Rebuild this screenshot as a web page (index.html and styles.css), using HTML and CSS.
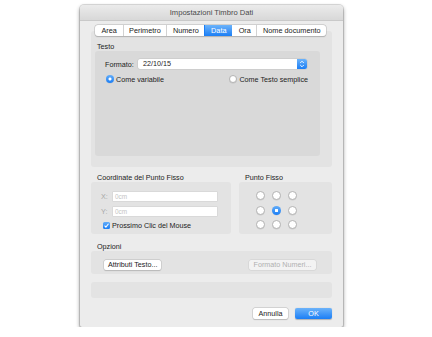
FILE: index.html
```html
<!DOCTYPE html>
<html lang="it">
<head>
    <meta charset="UTF-8">
    <meta name="viewport" content="width=device-width, initial-scale=1.0">
    <title>Impostazioni Timbro Dati</title>
    <link rel="stylesheet" href="styles.css">
</head>
<body>
    <div class="window">
        <div class="titlebar">Impostazioni Timbro Dati</div>
        <div class="content">
            <!-- Tabs -->
            <div class="tabs">
                <span class="tab">Area</span>
                <span class="tab">Perimetro</span>
                <span class="tab">Numero</span>
                <span class="tab selected">Data</span>
                <span class="tab">Ora</span>
                <span class="tab">Nome documento</span>
            </div>
            <div class="tab-panel">
                <div class="group-label">Testo</div>
                <div class="group inner">
                    <div class="format-row">
                        <span class="format-label">Formato:</span>
                        <div class="popup">
                            <span>22/10/15</span>
                            <span class="stepper">
                                <svg width="10" height="10" viewBox="0 0 10 10">
                                    <path d="M3.2 4 L5 2.2 L6.8 4" fill="none" stroke="#fff" stroke-width="0.9"/>
                                    <path d="M3.2 6 L5 7.8 L6.8 6" fill="none" stroke="#fff" stroke-width="0.9"/>
                                </svg>
                            </span>
                        </div>
                    </div>
                    <div class="radio-row">
                        <label class="radio-item"><span class="radio on"></span>Come variabile</label>
                        <label class="radio-item"><span class="radio"></span>Come Testo semplice</label>
                    </div>
                </div>
            </div>

            <!-- Fixed point -->
            <div class="split">
                <div class="split-left">
                    <div class="group-label">Coordinate del Punto Fisso</div>
                    <div class="group coords">
                        <div class="field-row">
                            <span class="axis">X:</span>
                            <span class="field">0cm</span>
                        </div>
                        <div class="field-row">
                            <span class="axis">Y:</span>
                            <span class="field">0cm</span>
                        </div>
                        <label class="check-row">
                            <span class="checkbox">
                                <svg width="8" height="8" viewBox="0 0 8 8">
                                    <path d="M1.8 4.2 L3.3 5.8 L6.3 2" fill="none" stroke="#fff" stroke-width="1.2"/>
                                </svg>
                            </span>
                            Prossimo Clic del Mouse
                        </label>
                    </div>
                </div>
                <div class="split-right">
                    <div class="group-label">Punto Fisso</div>
                    <div class="group anchor">
                        <div class="anchor-grid">
                            <span class="radio"></span>
                            <span class="radio"></span>
                            <span class="radio"></span>
                            <span class="radio"></span>
                            <span class="radio on"></span>
                            <span class="radio"></span>
                            <span class="radio"></span>
                            <span class="radio"></span>
                            <span class="radio"></span>
                        </div>
                    </div>
                </div>
            </div>

            <!-- Options -->
            <div class="group-label">Opzioni</div>
            <div class="group options">
                <button class="btn" type="button">Attributi Testo...</button>
                <button class="btn disabled" type="button">Formato Numeri...</button>
            </div>

            <div class="group preview"></div>

            <div class="actions">
                <button class="btn action" type="button">Annulla</button>
                <button class="btn action primary" type="button">OK</button>
            </div>
        </div>
    </div>
</body>
</html>
```

FILE: styles.css
```css
/* Page */
body {
    margin: 0;
    padding: 0;
    background-color: #fff;
    font-family: 'Liberation Sans', Arial, sans-serif;
    font-size: 7.2px;
    color: #222;
}

/* The dialog window */
.window {
    margin: 5px 0 0 80px;
    width: 263px;
    height: 322px;
    background-color: #ececec;
    border-radius: 4px 4px 2px 2px;
    box-shadow: 0 0 0 1px rgba(0, 0, 0, 0.12), 0 2px 4px rgba(0, 0, 0, 0.45);
    overflow: hidden;
}

.titlebar {
    height: 15px;
    line-height: 15px;
    text-align: center;
    font-size: 7.6px;
    color: #4a4a4a;
    background: linear-gradient(#ebebeb, #d8d8d8);
    border-bottom: 1px solid #c9c9c9;
}

.content {
    padding: 0 11px;
}

/* Tabs */
.tabs {
    display: flex;
    width: max-content;
    margin: 4px 0 -5px 4px;
    height: 11px;
    background-color: #fff;
    border-radius: 3px;
    box-shadow: 0 0 0 0.5px #b9b9b9, 0 0.5px 1px rgba(0, 0, 0, 0.25);
    position: relative;
    z-index: 1;
}

.tab {
    line-height: 11px;
    padding: 0 5.6px;
    border-left: 1px solid #d2d2d2;
    font-size: 7.3px;
}

.tab:first-child {
    border-left: none;
    padding-left: 6.5px;
}

.tab.selected {
    color: #fff;
    background: linear-gradient(#6cb3fa, #1b7ef5);
    border-left-color: #1b7ef5;
}

.tab.selected + .tab {
    border-left-color: transparent;
}

.tab-panel {
    background-color: #e3e3e3;
    border-radius: 3px;
    padding: 11px 12px 11px 4px;
}

/* Group boxes */
.group-label {
    height: 9px;
    line-height: 9px;
    padding-left: 6px;
}

.tab-panel .group-label {
    padding-left: 2px;
}

.group {
    background-color: #e3e3e3;
    border-radius: 3px;
    box-sizing: border-box;
}

.group.inner {
    background-color: #d9d9d9;
    height: 105px;
    padding: 8px 13px 0 10px;
}

.format-row {
    display: flex;
    align-items: center;
    height: 10px;
}

.format-label {
    width: 33px;
}

.popup {
    flex: 1;
    display: flex;
    justify-content: space-between;
    align-items: center;
    height: 10px;
    background-color: #fff;
    border-radius: 2px;
    box-shadow: 0 0 0 0.5px #c4c4c4;
    padding-left: 5px;
    line-height: 10px;
}

.stepper {
    width: 10px;
    height: 10px;
    background: linear-gradient(#6cb3fa, #1b7ef5);
    border-radius: 0 2px 2px 0;
}

.stepper svg {
    display: block;
}

.radio-row {
    display: flex;
    justify-content: space-between;
    margin-top: 6px;
    padding-left: 1px;
    margin-right: -1px;
}

.radio-item {
    display: flex;
    align-items: center;
    gap: 2px;
    height: 8px;
}

/* Radio buttons */
.radio {
    display: inline-block;
    width: 8px;
    height: 8px;
    box-sizing: border-box;
    border-radius: 50%;
    background-color: #fff;
    border: 0.5px solid #b4b4b4;
    box-shadow: 0 0.5px 0.5px rgba(0, 0, 0, 0.1);
}

.radio.on {
    border: none;
    background: radial-gradient(circle, #fff 0 1.4px, transparent 1.7px), linear-gradient(#63adf9, #1b7ef5);
}

/* Fixed point section */
.split {
    display: flex;
    gap: 8px;
    margin-top: 6px;
}

.split-left {
    width: 140px;
}

.split-right {
    flex: 1;
}

.split .group {
    height: 52px;
}

.group.coords {
    padding: 10px 14px 0 10px;
}

.field-row {
    display: flex;
    align-items: center;
    height: 9px;
    margin-bottom: 6px;
}

.axis {
    width: 12px;
    color: #a8a8a8;
}

.field {
    flex: 1;
    height: 9px;
    line-height: 9px;
    background-color: #fff;
    box-shadow: 0 0 0 0.5px #cfcfcf;
    padding-left: 2px;
    color: #c4c4c4;
    font-size: 6.4px;
}

.check-row {
    display: flex;
    align-items: center;
    gap: 2px;
    height: 8px;
    margin-left: 2px;
    margin-top: -1px;
}

.checkbox {
    width: 7px;
    height: 7px;
    border-radius: 1.5px;
    background: linear-gradient(#63adf9, #1b7ef5);
}

.checkbox svg {
    display: block;
    width: 7px;
    height: 7px;
}

.group.anchor {
    padding: 9px 0 0 17px;
}

.anchor-grid {
    display: grid;
    grid-template-columns: repeat(3, 9px);
    column-gap: 7px;
    row-gap: 5.5px;
}

.anchor-grid .radio {
    width: 9px;
    height: 9px;
}

/* Options */
.split + .group-label {
    margin-top: 8px;
}

.group.options {
    height: 23px;
    display: flex;
    justify-content: space-between;
    align-items: flex-start;
    padding: 9px 16px 0 13px;
}

/* Buttons */
.btn {
    font-family: 'Liberation Sans', Arial, sans-serif;
    font-size: 7.2px;
    color: #222;
    height: 10px;
    line-height: 10px;
    padding: 0 4px;
    margin: 0;
    border: none;
    border-radius: 2px;
    background-color: #fff;
    box-shadow: 0 0 0 0.5px #bdbdbd, 0 0.5px 1px rgba(0, 0, 0, 0.2);
}

.btn.disabled {
    color: #b0b0b0;
    background-color: #f3f3f3;
    box-shadow: 0 0 0 0.5px #cecece;
    width: 67px;
}

.group.preview {
    height: 16px;
    margin-top: 8px;
}

.actions {
    display: flex;
    justify-content: flex-end;
    gap: 7px;
    margin-top: 10px;
}

.btn.action {
    height: 11px;
    line-height: 11px;
    width: 35px;
}

.btn.primary {
    width: 37px;
    color: #fff;
    background: linear-gradient(#6cb3fa, #1b7ef5);
    box-shadow: 0 0.5px 1px rgba(0, 0, 0, 0.25);
}
```
